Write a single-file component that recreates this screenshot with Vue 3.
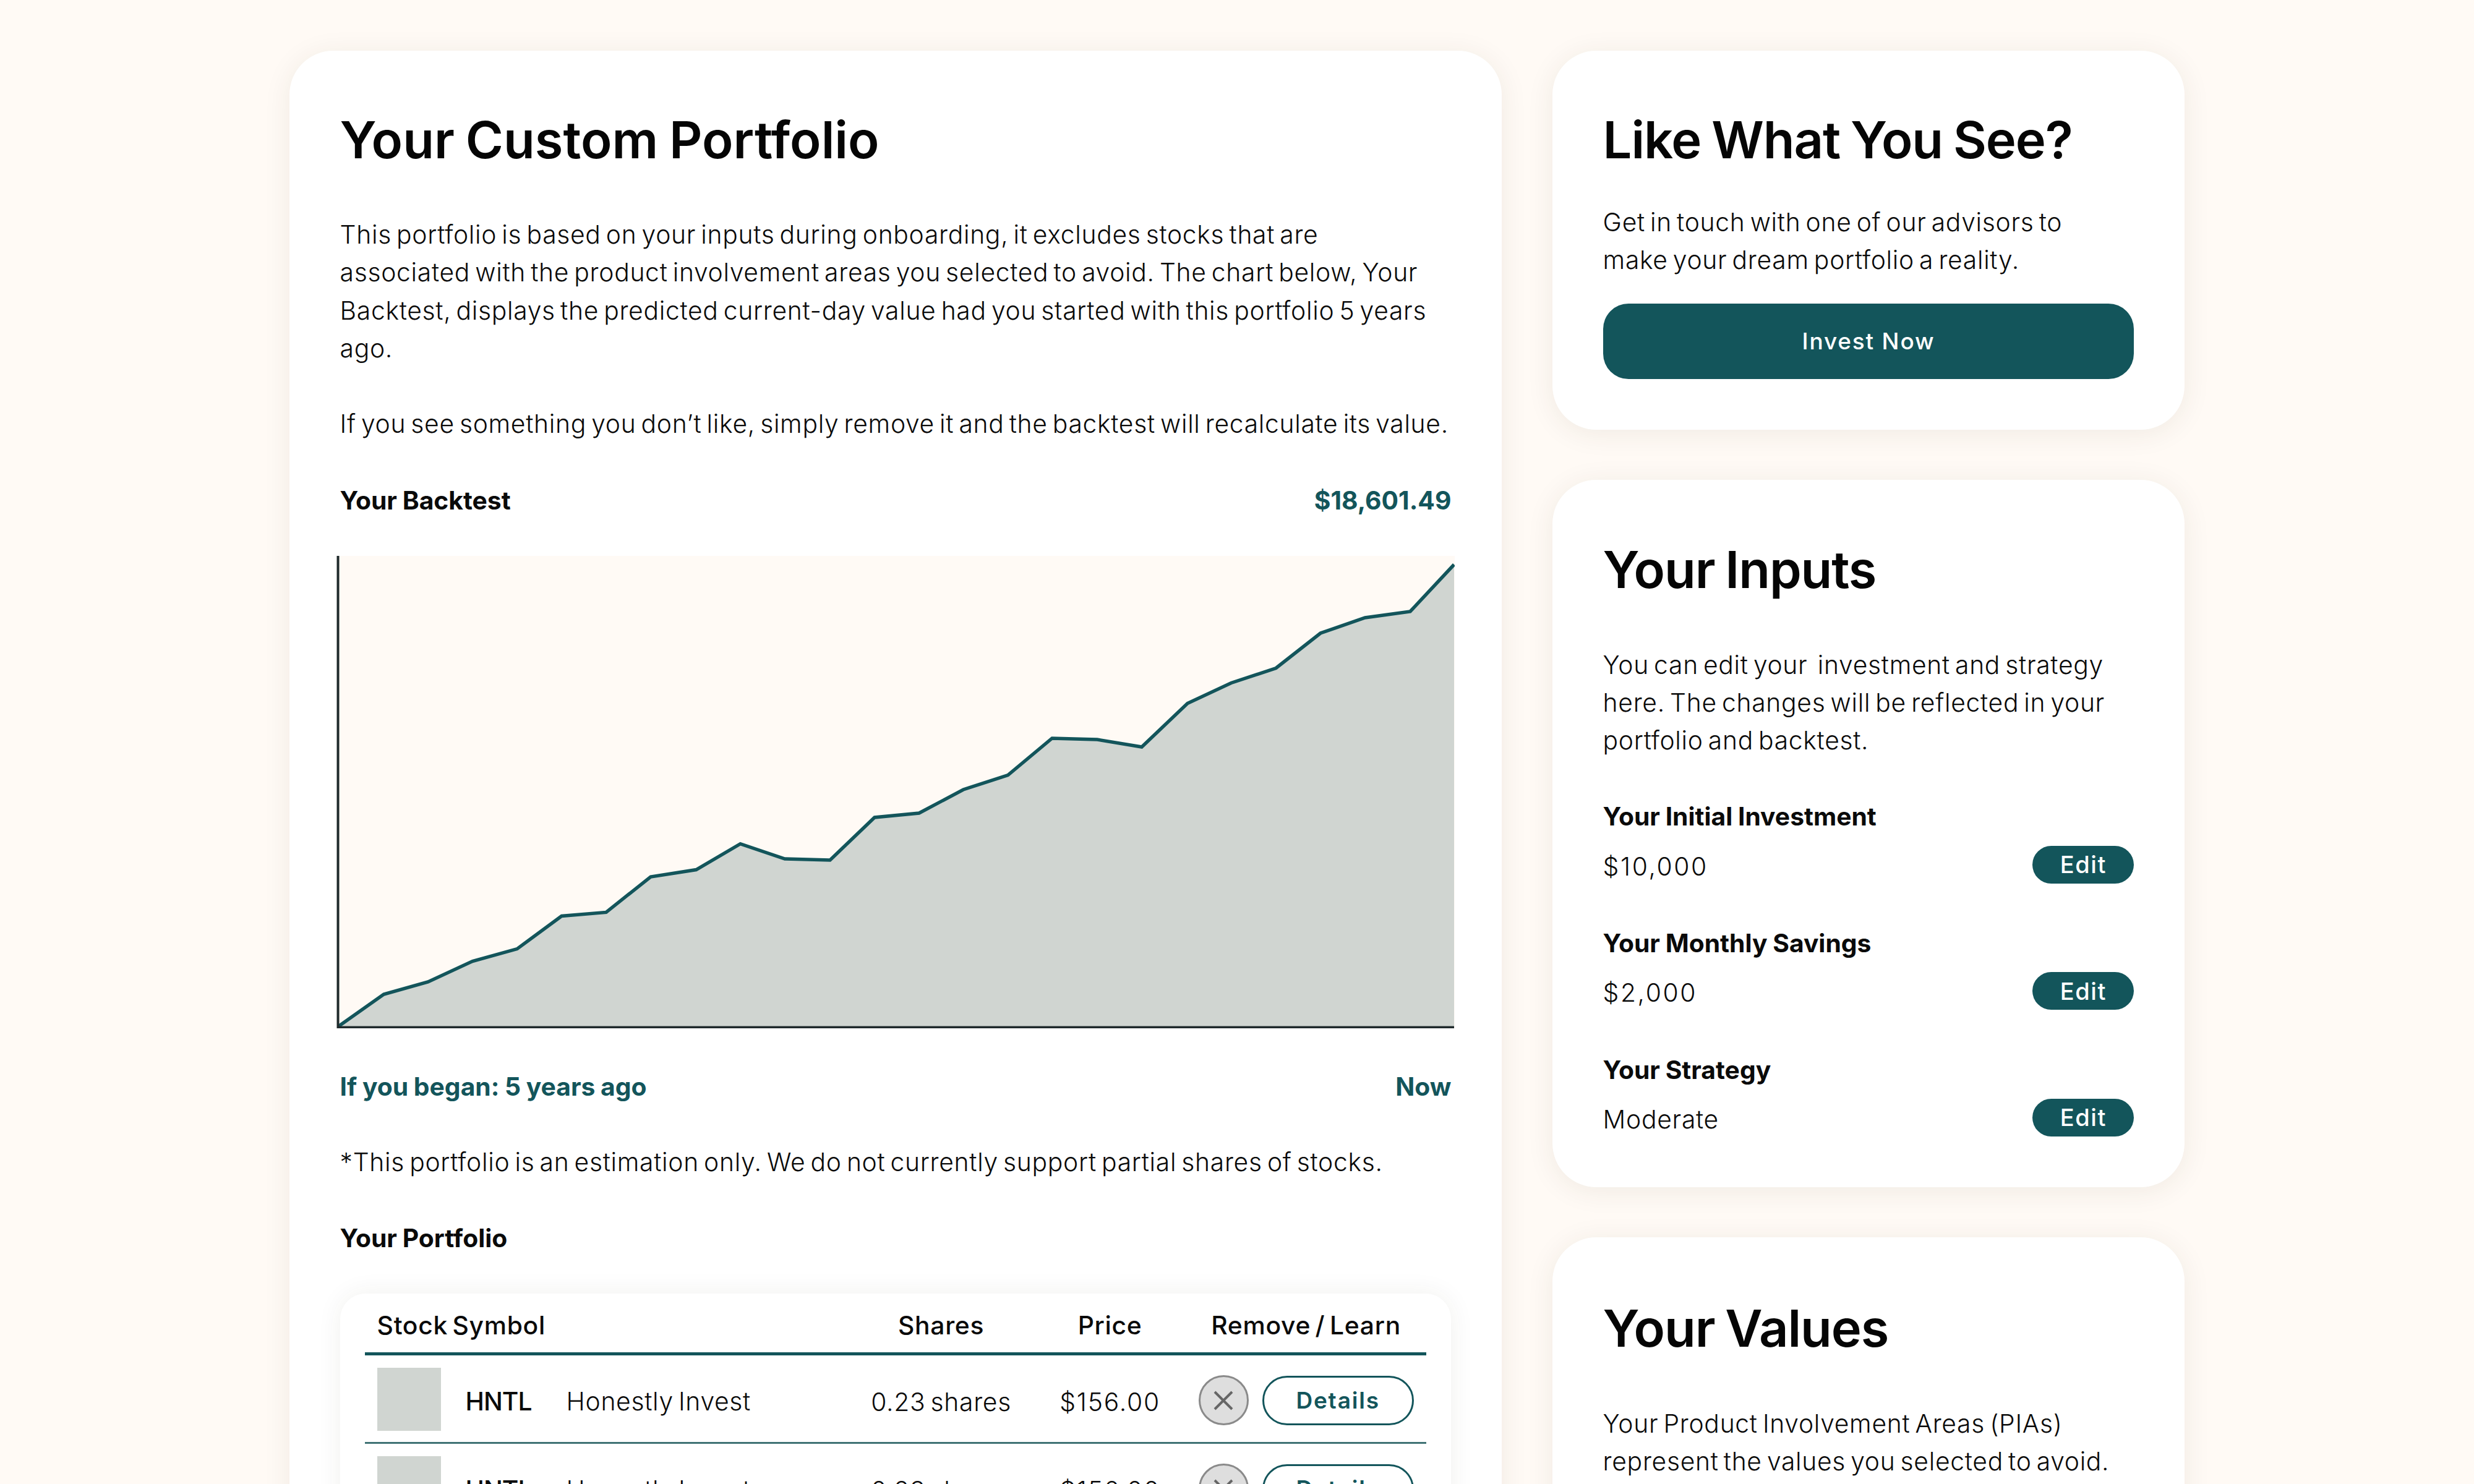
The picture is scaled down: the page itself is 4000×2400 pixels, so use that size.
<script setup>
const pts = [[547,1660],[620.5,1608],[692,1588],[764,1554.5],[836,1534.6],[908,1481.5],[980,1475.4],[1052,1418],[1125.6,1406.5],[1197,1364.7],[1269,1389],[1342,1391],[1414,1322],[1486,1315],[1557.5,1277],[1629.6,1253.5],[1701,1194],[1774,1196],[1846,1208],[1920,1137.6],[1990.6,1104.5],[2063,1080.5],[2135,1024],[2207,999],[2280,989],[2351,913]]
const linePts = pts.map(p => p.join(',')).join(' ')
const areaPts = linePts + ' 2351,1661 547,1661'
const rows = [1, 2]
const inputs = [
  { label: 'Your Initial Investment', value: '$10,000', num: true },
  { label: 'Your Monthly Savings', value: '$2,000', num: true },
  { label: 'Your Strategy', value: 'Moderate', num: false }
]
</script>

<template>
  <div class="page">
    <main class="card main-card">
      <h1>Your Custom Portfolio</h1>
      <p class="intro">This portfolio is based on your inputs during onboarding, it excludes stocks that are<br>associated with the product involvement areas you selected to avoid. The chart below, Your<br>Backtest, displays the predicted current-day value had you started with this portfolio 5 years<br>ago.</p>
      <p class="intro">If you see something you don’t like, simply remove it and the backtest will recalculate its value.</p>
      <div class="split backtest">
        <strong>Your Backtest</strong>
        <strong class="teal">$18,601.49</strong>
      </div>
      <svg class="chart" viewBox="544 899 1808 764" width="1808" height="764">
        <rect x="544" y="899" width="1808" height="764" fill="#fffaf5" />
        <polygon :points="areaPts" fill="#d0d5d1" />
        <polyline :points="linePts" fill="none" stroke="#13555b" stroke-width="5.5" stroke-linejoin="miter" />
        <path d="M546.5 899V1661.5H2351" fill="none" stroke="#1f2a2c" stroke-width="4" />
      </svg>
      <div class="split axis-labels teal">
        <strong>If you began: 5 years ago</strong>
        <strong>Now</strong>
      </div>
      <p class="note">*This portfolio is an estimation only. We do not currently support partial shares of stocks.</p>
      <strong class="section-title">Your Portfolio</strong>
      <section class="table">
        <div class="grid head">
          <span class="col-symbol">Stock Symbol</span>
          <span class="center">Shares</span>
          <span class="center">Price</span>
          <span class="center head-actions">Remove / Learn</span>
        </div>
        <div v-for="r in rows" :key="r" class="grid row">
          <div class="stock">
            <span class="thumb"></span>
            <span class="ticker">HNTL</span>
            <span class="name">Honestly Invest</span>
          </div>
          <span class="center">0.23 shares</span>
          <span class="center price">$156.00</span>
          <div class="actions">
            <button class="remove" aria-label="Remove">
              <svg viewBox="0 0 40 40" width="44" height="40"><path d="M6 6L34 34M34 6L6 34" stroke="#666" stroke-width="4" fill="none" /></svg>
            </button>
            <button class="details">Details</button>
          </div>
        </div>
      </section>
    </main>

    <aside class="side">
      <section class="card">
        <h2>Like What You See?</h2>
        <p class="lead">Get in touch with one of our advisors to<br>make your dream portfolio a reality.</p>
        <button class="invest">Invest Now</button>
      </section>
      <section class="card inputs-card">
        <h2>Your Inputs</h2>
        <p class="lead wide-gap">You can edit your&nbsp; investment and strategy<br>here. The changes will be reflected in your<br>portfolio and backtest.</p>
        <div class="inputs">
          <div v-for="item in inputs" :key="item.label" class="input-item">
            <strong>{{ item.label }}</strong>
            <div class="value-row">
              <span :class="{ num: item.num }">{{ item.value }}</span>
              <button class="edit">Edit</button>
            </div>
          </div>
        </div>
      </section>
      <section class="card last">
        <h2>Your Values</h2>
        <p class="lead wide-gap">Your Product Involvement Areas (PIAs)<br>represent the values you selected to avoid.</p>
      </section>
    </aside>
  </div>
</template>

<style scoped>
.page {
  display: flex;
  justify-content: center;
  align-items: flex-start;
  gap: 82px;
  box-sizing: border-box;
  height: 2400px;
  padding-top: 81.6px;
  overflow: hidden;
  background: #fffaf5;
  color: #0a0a0a;
  font-family: Inter, "Liberation Sans", sans-serif;
  font-size: 40.8px;
  line-height: 61.2px;
  font-weight: 350;
  letter-spacing: 0.7px;
  word-spacing: -4px;
  white-space: nowrap;
}
.card {
  box-sizing: border-box;
  background: #fff;
  border-radius: 71px;
  padding: 81.6px;
  box-shadow: 0 6px 45px rgba(60, 50, 30, 0.08);
}
.main-card {
  width: 1960px;
  flex: none;
  height: 2600px;
}
.side {
  width: 1022px;
  flex: none;
  display: flex;
  flex-direction: column;
  gap: 81.6px;
}
.inputs-card { padding-bottom: 81.6px; }
.last { height: 800px; }
h1, h2 {
  margin: 0;
  font-size: 83px;
  padding-top: 3px;
  line-height: 120px;
  font-weight: 600;
  letter-spacing: -1.1px;
  word-spacing: -3px;
  color: #050505;
}
h1 { letter-spacing: 0; }
p { margin: 0; }
strong {
  font-weight: 650;
  letter-spacing: 0;
  word-spacing: -1px;
}
.intro { margin-top: 61.2px; }
h1 + .intro { margin-top: 63px; }
.split {
  display: flex;
  justify-content: space-between;
  margin-top: 61.2px;
}
.backtest { margin-top: 62.7px; }
.teal { color: #13555b; }
.chart {
  display: block;
  margin: 58.5px -4px 0 -6px;
}
.axis-labels { margin-top: 64px; }
.note { margin-top: 61.2px; }
.section-title {
  display: block;
  margin-top: 61.2px;
}
.table {
  margin-top: 59px;
  height: 400px;
  box-sizing: border-box;
  padding: 0 40px;
  background: #fff;
  border-radius: 41px;
  box-shadow: 0 0 40px rgba(60, 50, 30, 0.07);
}
.grid {
  display: grid;
  grid-template-columns: 794px 276px 270px 380px;
  align-items: center;
}
.head {
  height: 100px;
  font-weight: 500;
  border-bottom: 5px solid #13555b;
  box-sizing: border-box;
  padding-top: 8px;
}
.head-actions { padding-right: 16px; }
.col-symbol { padding-left: 20px; }
.center { text-align: center; }
.price { letter-spacing: 1.8px; }
.row {
  height: 143px;
  box-sizing: border-box;
  padding-top: 3px;
  border-bottom: 3px solid #3f7274;
}
.stock {
  display: flex;
  align-items: center;
  padding-left: 20px;
}
.thumb {
  width: 103px;
  height: 102px;
  background: #d0d5d1;
  flex: none;
}
.ticker {
  margin-left: 40px;
  width: 163px;
  font-weight: 550;
  letter-spacing: -1px;
  padding-top: 6px;
}
.name { padding-top: 6px; }
.row > .center { padding-top: 8px; }
.actions {
  display: flex;
  align-items: center;
  gap: 22px;
  justify-content: flex-end;
  padding-right: 24px;
  padding-top: 3px;
}
button {
  font-family: inherit;
  border: none;
  cursor: pointer;
  padding: 0;
}
.remove {
  width: 81px;
  height: 81px;
  border-radius: 50%;
  flex: none;
  background: #dedede;
  border: 3px solid #8a8a8a;
  display: flex;
  align-items: center;
  justify-content: center;
}
.details {
  width: 245px;
  height: 80px;
  flex: none;
  border-radius: 40px;
  background: #fff;
  border: 3px solid #13555b;
  color: #13555b;
  font-size: 37px;
  font-weight: 600;
  letter-spacing: 1.8px;
}
h2 + .lead { margin-top: 43px; }
h2 + .wide-gap { margin-top: 64px; }
.last h2 { padding-top: 5px; }
.invest {
  display: block;
  width: 100%;
  height: 122.4px;
  margin-top: 39px;
  border-radius: 41px;
  background: #13555b;
  color: #fff;
  font-size: 37px;
  font-weight: 550;
  letter-spacing: 1.8px;
}
.inputs {
  display: flex;
  flex-direction: column;
  gap: 66.2px;
  margin-top: 62px;
}
.input-item > strong { display: block; }
.value-row {
  display: flex;
  justify-content: space-between;
  align-items: center;
  height: 61.2px;
  margin-top: 16px;
}
.value-row span { padding-top: 6px; }
.num { letter-spacing: 2.6px; }
.edit {
  width: 164px;
  height: 61.2px;
  border-radius: 31px;
  background: #13555b;
  color: #fff;
  font-size: 38px;
  font-weight: 550;
  letter-spacing: 1.6px;
}
</style>

<style>
html, body { margin: 0; background: #fffaf5; overflow: hidden; }
</style>
